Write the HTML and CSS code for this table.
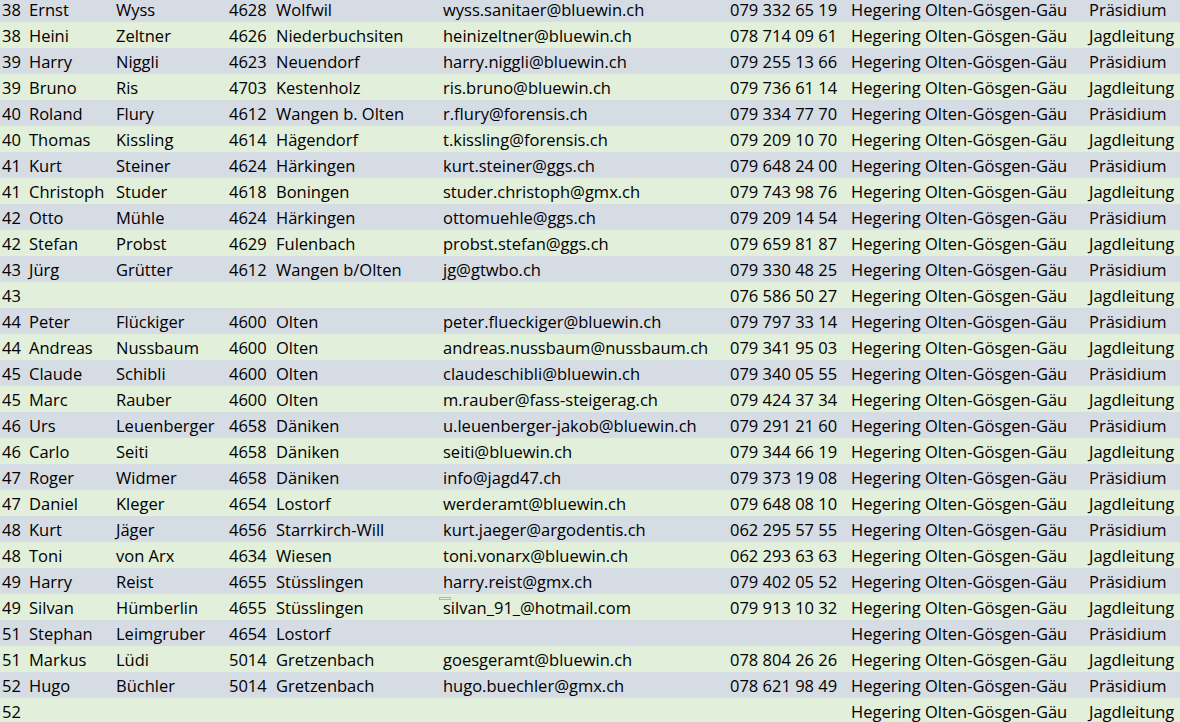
FILE: index.html
```html
<!DOCTYPE html>
<html lang="de">
<head>
    <meta charset="UTF-8">
    <meta name="viewport" content="width=device-width, initial-scale=1.0">
    <title>Hegering Olten-Gösgen-Gäu</title>
    <link rel="stylesheet" href="styles.css">
</head>
<body>
    <table class="sheet">
        <colgroup>
            <col class="c-nr">
            <col class="c-first">
            <col class="c-last">
            <col class="c-plz">
            <col class="c-place">
            <col class="c-mail">
            <col class="c-phone">
            <col class="c-group">
            <col class="c-role">
        </colgroup>
        <tbody>
            <tr><td>38</td><td>Ernst</td><td>Wyss</td><td>4628</td><td>Wolfwil</td><td>wyss.sanitaer@bluewin.ch</td><td>079 332 65 19</td><td>Hegering Olten-Gösgen-Gäu</td><td>Präsidium</td></tr>
            <tr><td>38</td><td>Heini</td><td>Zeltner</td><td>4626</td><td>Niederbuchsiten</td><td>heinizeltner@bluewin.ch</td><td>078 714 09 61</td><td>Hegering Olten-Gösgen-Gäu</td><td>Jagdleitung</td></tr>
            <tr><td>39</td><td>Harry</td><td>Niggli</td><td>4623</td><td>Neuendorf</td><td>harry.niggli@bluewin.ch</td><td>079 255 13 66</td><td>Hegering Olten-Gösgen-Gäu</td><td>Präsidium</td></tr>
            <tr><td>39</td><td>Bruno</td><td>Ris</td><td>4703</td><td>Kestenholz</td><td>ris.bruno@bluewin.ch</td><td>079 736 61 14</td><td>Hegering Olten-Gösgen-Gäu</td><td>Jagdleitung</td></tr>
            <tr><td>40</td><td>Roland</td><td>Flury</td><td>4612</td><td>Wangen b. Olten</td><td>r.flury@forensis.ch</td><td>079 334 77 70</td><td>Hegering Olten-Gösgen-Gäu</td><td>Präsidium</td></tr>
            <tr><td>40</td><td>Thomas</td><td>Kissling</td><td>4614</td><td>Hägendorf</td><td>t.kissling@forensis.ch</td><td>079 209 10 70</td><td>Hegering Olten-Gösgen-Gäu</td><td>Jagdleitung</td></tr>
            <tr><td>41</td><td>Kurt</td><td>Steiner</td><td>4624</td><td>Härkingen</td><td>kurt.steiner@ggs.ch</td><td>079 648 24 00</td><td>Hegering Olten-Gösgen-Gäu</td><td>Präsidium</td></tr>
            <tr><td>41</td><td>Christoph</td><td>Studer</td><td>4618</td><td>Boningen</td><td>studer.christoph@gmx.ch</td><td>079 743 98 76</td><td>Hegering Olten-Gösgen-Gäu</td><td>Jagdleitung</td></tr>
            <tr><td>42</td><td>Otto</td><td>Mühle</td><td>4624</td><td>Härkingen</td><td>ottomuehle@ggs.ch</td><td>079 209 14 54</td><td>Hegering Olten-Gösgen-Gäu</td><td>Präsidium</td></tr>
            <tr><td>42</td><td>Stefan</td><td>Probst</td><td>4629</td><td>Fulenbach</td><td>probst.stefan@ggs.ch</td><td>079 659 81 87</td><td>Hegering Olten-Gösgen-Gäu</td><td>Jagdleitung</td></tr>
            <tr><td>43</td><td>Jürg</td><td>Grütter</td><td>4612</td><td>Wangen b/Olten</td><td>jg@gtwbo.ch</td><td>079 330 48 25</td><td>Hegering Olten-Gösgen-Gäu</td><td>Präsidium</td></tr>
            <tr><td>43</td><td></td><td></td><td></td><td></td><td></td><td>076 586 50 27</td><td>Hegering Olten-Gösgen-Gäu</td><td>Jagdleitung</td></tr>
            <tr><td>44</td><td>Peter</td><td>Flückiger</td><td>4600</td><td>Olten</td><td>peter.flueckiger@bluewin.ch</td><td>079 797 33 14</td><td>Hegering Olten-Gösgen-Gäu</td><td>Präsidium</td></tr>
            <tr><td>44</td><td>Andreas</td><td>Nussbaum</td><td>4600</td><td>Olten</td><td>andreas.nussbaum@nussbaum.ch</td><td>079 341 95 03</td><td>Hegering Olten-Gösgen-Gäu</td><td>Jagdleitung</td></tr>
            <tr><td>45</td><td>Claude</td><td>Schibli</td><td>4600</td><td>Olten</td><td>claudeschibli@bluewin.ch</td><td>079 340 05 55</td><td>Hegering Olten-Gösgen-Gäu</td><td>Präsidium</td></tr>
            <tr><td>45</td><td>Marc</td><td>Rauber</td><td>4600</td><td>Olten</td><td>m.rauber@fass-steigerag.ch</td><td>079 424 37 34</td><td>Hegering Olten-Gösgen-Gäu</td><td>Jagdleitung</td></tr>
            <tr><td>46</td><td>Urs</td><td>Leuenberger</td><td>4658</td><td>Däniken</td><td>u.leuenberger-jakob@bluewin.ch</td><td>079 291 21 60</td><td>Hegering Olten-Gösgen-Gäu</td><td>Präsidium</td></tr>
            <tr><td>46</td><td>Carlo</td><td>Seiti</td><td>4658</td><td>Däniken</td><td>seiti@bluewin.ch</td><td>079 344 66 19</td><td>Hegering Olten-Gösgen-Gäu</td><td>Jagdleitung</td></tr>
            <tr><td>47</td><td>Roger</td><td>Widmer</td><td>4658</td><td>Däniken</td><td>info@jagd47.ch</td><td>079 373 19 08</td><td>Hegering Olten-Gösgen-Gäu</td><td>Präsidium</td></tr>
            <tr><td>47</td><td>Daniel</td><td>Kleger</td><td>4654</td><td>Lostorf</td><td>werderamt@bluewin.ch</td><td>079 648 08 10</td><td>Hegering Olten-Gösgen-Gäu</td><td>Jagdleitung</td></tr>
            <tr><td>48</td><td>Kurt</td><td>Jäger</td><td>4656</td><td>Starrkirch-Will</td><td>kurt.jaeger@argodentis.ch</td><td>062 295 57 55</td><td>Hegering Olten-Gösgen-Gäu</td><td>Präsidium</td></tr>
            <tr><td>48</td><td>Toni</td><td>von Arx</td><td>4634</td><td>Wiesen</td><td>toni.vonarx@bluewin.ch</td><td>062 293 63 63</td><td>Hegering Olten-Gösgen-Gäu</td><td>Jagdleitung</td></tr>
            <tr><td>49</td><td>Harry</td><td>Reist</td><td>4655</td><td>Stüsslingen</td><td>harry.reist@gmx.ch</td><td>079 402 05 52</td><td>Hegering Olten-Gösgen-Gäu</td><td>Präsidium</td></tr>
            <tr><td>49</td><td>Silvan</td><td>Hümberlin</td><td>4655</td><td>Stüsslingen</td><td class="marked">silvan_91_@hotmail.com</td><td>079 913 10 32</td><td>Hegering Olten-Gösgen-Gäu</td><td>Jagdleitung</td></tr>
            <tr><td>51</td><td>Stephan</td><td>Leimgruber</td><td>4654</td><td>Lostorf</td><td></td><td></td><td>Hegering Olten-Gösgen-Gäu</td><td>Präsidium</td></tr>
            <tr><td>51</td><td>Markus</td><td>Lüdi</td><td>5014</td><td>Gretzenbach</td><td>goesgeramt@bluewin.ch</td><td>078 804 26 26</td><td>Hegering Olten-Gösgen-Gäu</td><td>Jagdleitung</td></tr>
            <tr><td>52</td><td>Hugo</td><td>Büchler</td><td>5014</td><td>Gretzenbach</td><td>hugo.buechler@gmx.ch</td><td>078 621 98 49</td><td>Hegering Olten-Gösgen-Gäu</td><td>Präsidium</td></tr>
            <tr><td>52</td><td></td><td></td><td></td><td></td><td></td><td></td><td>Hegering Olten-Gösgen-Gäu</td><td>Jagdleitung</td></tr>
        </tbody>
    </table>
</body>
</html>
```

FILE: styles.css
```css
body {
    margin: 0;
    background-color: #e2efda;
    font-family: "Open Sans", "Liberation Sans", sans-serif;
    font-size: 16.5px;
    color: #000;
    overflow: hidden;
}
.sheet {
    margin-top: -4px;
    width: 1187px;
    border-collapse: collapse;
    table-layout: fixed;
}
.sheet td {
    height: 26px;
    padding: 0 0 3px 2px;
    box-sizing: border-box;
    vertical-align: bottom;
    line-height: 18px;
    white-space: nowrap;
    overflow: visible;
}
.sheet tr:nth-child(odd) {
    background-color: #d6dce4;
}
.sheet tr:nth-child(even) {
    background-color: #e2efda;
}
.c-nr { width: 27px; }
.c-first { width: 87px; }
.c-last { width: 113px; }
.c-plz { width: 47px; }
.c-place { width: 167px; }
.c-mail { width: 287px; }
.c-phone { width: 121px; }
.c-group { width: 238px; }
.c-role { width: 100px; }
.marked {
    position: relative;
}
.marked::before {
    content: "";
    position: absolute;
    left: -2px;
    top: 3px;
    width: 10px;
    height: 1px;
    border: 1px solid #8fc6b0;
}
```
